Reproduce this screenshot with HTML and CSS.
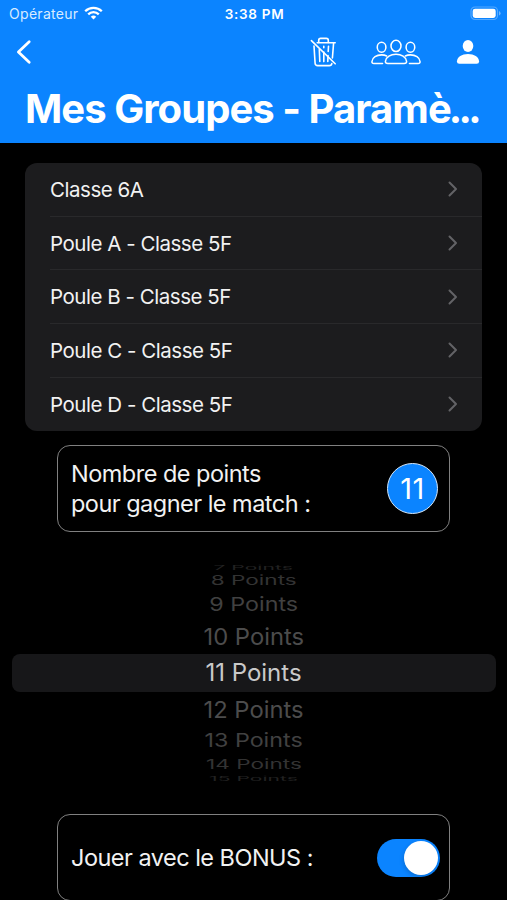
FILE: index.html
```html
<!DOCTYPE html>
<html lang="fr">
<head>
    <meta charset="UTF-8">
    <meta name="viewport" content="width=device-width, initial-scale=1.0">
    <title>Mes Groupes - Paramètres</title>
    <link rel="stylesheet" href="styles.css">
</head>
<body>
    <header class="header">
        <div class="status-bar">
            <div class="carrier">
                <span class="carrier-name">Opérateur</span>
                <svg class="wifi" width="19" height="14" viewBox="0 0 19 14" fill="none" stroke="#fff" stroke-width="2.3">
                    <path d="M1.2 5.2a11.8 11.8 0 0 1 16.6 0"/>
                    <path d="M4.2 8.4a7.5 7.5 0 0 1 10.6 0"/>
                    <path d="M9.5 13.6l-2.7-2.8a3.9 3.9 0 0 1 5.4 0z" fill="#fff" stroke="none"/>
                </svg>
            </div>
            <span class="clock">3:38 PM</span>
            <svg class="battery" width="31" height="15" viewBox="0 0 31 15">
                <rect x="1" y="1" width="26.5" height="12.5" rx="4" fill="none" stroke="#fff" stroke-opacity="0.3" stroke-width="1.2"/>
                <rect x="2.7" y="2.7" width="23" height="9.2" rx="2.4" fill="#fff"/>
                <path d="M29 5v4.6q1.6-.7 1.6-2.3T29 5z" fill="#fff" fill-opacity="0.4"/>
            </svg>
        </div>

        <nav class="nav-bar">
            <svg class="back" width="16" height="26" viewBox="0 0 16 26" fill="none" stroke="#fff" stroke-width="2.8" stroke-linecap="round" stroke-linejoin="round">
                <path d="M13.2 2.8L2.4 13l10.8 10.2"/>
            </svg>
            <div class="actions">
                <!-- corbeille barrée -->
                <svg width="28" height="32" viewBox="0 0 28 32" fill="none" stroke="#fff" stroke-width="1.6" stroke-linecap="round" stroke-linejoin="round">
                    <path d="M8.7 6.5V4.4q0-2 2-2h5.6q2 0 2 2v2.1"/>
                    <path d="M7.2 6.8h18M23.6 7l-1.2 15"/>
                    <path d="M4 10l1.1 17.2q.2 2.4 2.6 2.4h11.6q2.2 0 2.5-2"/>
                    <path d="M9.3 13.5l.5 12M13.8 16v9.6M18 19.5l-.2 6M13.8 10.3v1.4M18.5 10.3l-.3 5.2"/>
                    <path d="M1.4 4.6L25.2 27.8"/>
                </svg>
                <!-- groupe -->
                <svg class="group-icon" width="50" height="26" viewBox="0 0 52 26" preserveAspectRatio="none" fill="none" stroke="#fff" stroke-width="1.6" stroke-linecap="round" stroke-linejoin="round">
                    <ellipse cx="26" cy="6.9" rx="5.2" ry="5.6"/>
                    <path d="M17.5 24.5q-2.8 0-2.5-2.2c.6-4.4 5.4-7 11-7s10.4 2.6 11 7q.3 2.2-2.5 2.2z"/>
                    <ellipse cx="11" cy="8.2" rx="4.5" ry="5"/>
                    <path d="M12 24.5H3q-2.2 0-2-2c.5-4 4.7-6.6 10-6.6q3 0 5.3 1.1"/>
                    <ellipse cx="41" cy="8.2" rx="4.5" ry="5"/>
                    <path d="M40 24.5h9q2.2 0 2-2c-.5-4-4.7-6.6-10-6.6q-3 0-5.3 1.1"/>
                </svg>
                <!-- profil -->
                <svg width="24" height="26" viewBox="0 0 24 26" fill="#fff">
                    <ellipse cx="12" cy="7" rx="5.3" ry="6"/>
                    <path d="M3.3 24.7Q.9 24.7.9 22.4C1.3 18 5.8 15.1 12 15.1s10.7 2.9 11.1 7.3q0 2.3-2.4 2.3z"/>
                </svg>
            </div>
        </nav>

        <h1 class="title">Mes Groupes - Paramè<span class="dots">...</span></h1>
    </header>

    <main>
        <ul class="group-list">
            <li><span>Classe 6A</span><svg class="chevron" viewBox="0 0 10 16"><path d="M1.5 1.5L8 8l-6.5 6.5"/></svg></li>
            <li><span>Poule A - Classe 5F</span><svg class="chevron" viewBox="0 0 10 16"><path d="M1.5 1.5L8 8l-6.5 6.5"/></svg></li>
            <li><span>Poule B - Classe 5F</span><svg class="chevron" viewBox="0 0 10 16"><path d="M1.5 1.5L8 8l-6.5 6.5"/></svg></li>
            <li><span>Poule C - Classe 5F</span><svg class="chevron" viewBox="0 0 10 16"><path d="M1.5 1.5L8 8l-6.5 6.5"/></svg></li>
            <li><span>Poule D - Classe 5F</span><svg class="chevron" viewBox="0 0 10 16"><path d="M1.5 1.5L8 8l-6.5 6.5"/></svg></li>
        </ul>

        <section class="card points-card">
            <p>Nombre de points<br>pour gagner le match :</p>
            <span class="badge">11</span>
        </section>

        <div class="picker">
            <div class="row far"><span>7 Points</span></div>
            <div class="row third"><span>8 Points</span></div>
            <div class="row second"><span>9 Points</span></div>
            <div class="row first"><span>10 Points</span></div>
            <div class="row selected"><span>11 Points</span></div>
            <div class="row first"><span>12 Points</span></div>
            <div class="row second"><span>13 Points</span></div>
            <div class="row third"><span>14 Points</span></div>
            <div class="row far"><span>15 Points</span></div>
        </div>

        <section class="card bonus-card">
            <p>Jouer avec le BONUS :</p>
            <span class="switch"><span class="knob"></span></span>
        </section>
    </main>
</body>
</html>
```
FILE: styles.css
```css
* {
    box-sizing: border-box;
}

body {
    margin: 0;
    height: 900px;
    overflow: hidden;
    background: #000000;
    color: #f2f2f2;
    font-family: Inter, "Liberation Sans", sans-serif;
}

.header {
    height: 143px;
    background: #0b84ff;
    color: #ffffff;
}

/* barre d'état */
.status-bar {
    display: grid;
    grid-template-columns: 1fr auto 1fr;
    align-items: center;
    height: 27px;
    padding: 0 7px 0 9px;
}

.carrier {
    display: flex;
    align-items: center;
    gap: 6px;
}

.carrier-name {
    font-size: 14px;
    letter-spacing: 0.3px;
    color: #d8ebff;
}

.wifi {
    margin-top: -1px;
}

.clock {
    font-size: 13.5px;
    font-weight: 600;
    letter-spacing: 0.7px;
}

.battery {
    justify-self: end;
    margin-right: -1px;
}

.nav-bar {
    display: flex;
    justify-content: space-between;
    align-items: center;
    height: 49px;
    padding: 1px 27px 0 16px;
}

.actions {
    display: flex;
    align-items: center;
    gap: 34px;
}

.group-icon {
    margin: 0 1px 0 -1px;
}

.title {
    margin: 0;
    padding: 8px 0 0 25px;
    font-size: 40px;
    line-height: 50px;
    font-weight: 700;
    letter-spacing: -0.95px;
    white-space: nowrap;
}

.dots {
    letter-spacing: -3.6px;
    margin-left: -2px;
}

main {
    display: flex;
    flex-direction: column;
    align-items: center;
}

.group-list {
    width: 457px;
    margin: 20px 0 14px;
    padding: 0 0 0 25px;
    list-style: none;
    background: #1c1c1e;
    border-radius: 12px;
}

.group-list li {
    display: flex;
    justify-content: space-between;
    align-items: center;
    height: 53.7px;
    padding-right: 24px;
    border-bottom: 1px solid #29292b;
    font-size: 20.5px;
    letter-spacing: -0.47px;
}

.group-list li:last-child {
    border-bottom-color: transparent;
}

.chevron {
    width: 10px;
    height: 16px;
    fill: none;
    stroke: #636366;
    stroke-width: 2;
    stroke-linecap: round;
    stroke-linejoin: round;
}

.card {
    display: flex;
    justify-content: space-between;
    align-items: center;
    width: 393px;
    height: 87px;
    padding: 0 11px 0 13px;
    border: 1px solid #808080;
    border-radius: 13px;
    flex-shrink: 0;
}

.card p {
    margin: 0;
    font-size: 23.5px;
    line-height: 30.5px;
    letter-spacing: -0.52px;
    white-space: nowrap;
}

.points-card p {
    padding-top: 1px;
}

.badge {
    display: flex;
    align-items: center;
    justify-content: center;
    width: 51px;
    height: 51px;
    border: 1.5px solid #d5e8fb;
    border-radius: 50%;
    background: #0b84ff;
    color: #ffffff;
    font-size: 29px;
    letter-spacing: 0.5px;
}

/* roue de sélection */
.picker {
    display: flex;
    flex-direction: column;
    align-items: center;
    width: 484px;
    height: 282px;
    padding-top: 32px;
}

.row {
    display: flex;
    align-items: center;
    justify-content: center;
    width: 100%;
    font-size: 24px;
    line-height: 30px;
    color: #4c4c4c;
}

.selected {
    height: 38px;
    background: #171719;
    border-radius: 8px;
    color: #c9c9c9;
}

.first {
    height: 35px;
}

.first span {
    transform: scale(0.99, 0.95);
}

.second {
    height: 28px;
    color: #414141;
}

.second span {
    transform: scale(0.97, 0.8);
}

.third {
    height: 20px;
    color: #333333;
}

.third span {
    transform: scale(0.94, 0.55);
}

.far {
    height: 7px;
    overflow: hidden;
    color: #222222;
}

.far span {
    transform: scale(0.88, 0.28);
}

.switch {
    display: flex;
    justify-content: flex-end;
    align-items: center;
    width: 63px;
    height: 38px;
    padding: 2px;
    margin-right: -2px;
    border-radius: 19px;
    background: #0b84ff;
}

.knob {
    width: 34px;
    height: 34px;
    border-radius: 50%;
    background: #ffffff;
    box-shadow: -1px 2px 4px rgba(0, 0, 0, 0.15);
}
```
